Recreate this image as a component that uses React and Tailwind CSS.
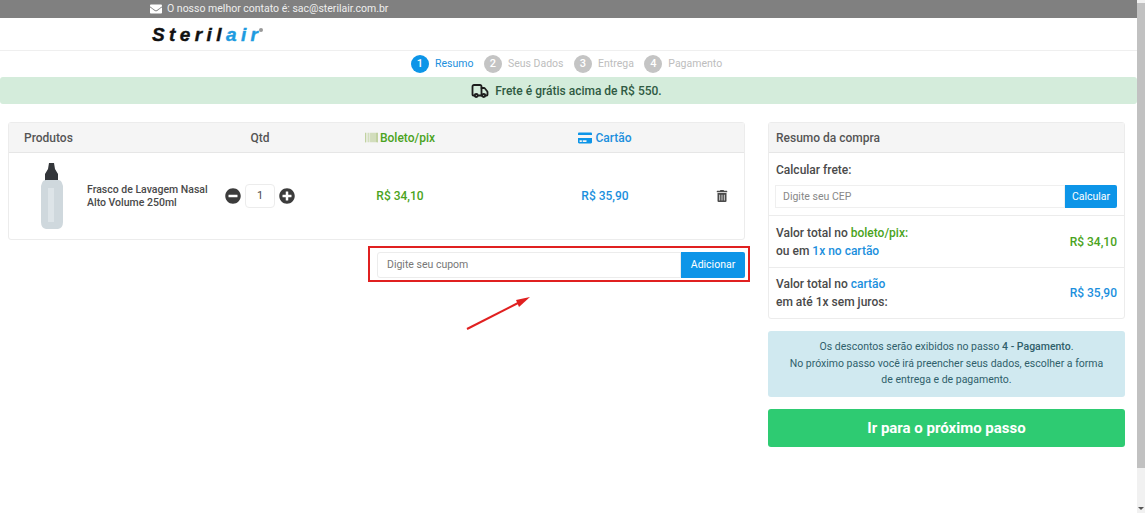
import React from "react";
import { FaEnvelope, FaBarcode, FaCreditCard, FaMinusCircle, FaPlusCircle, FaTrashAlt } from "react-icons/fa";
import { Truck } from "lucide-react";

const Step = ({ n, label, active }) => (
  <div className="flex items-center">
    <span className={`w-[18px] h-[18px] rounded-full flex items-center justify-center text-[11px] font-medium text-white ${active ? "bg-[#0d95e8]" : "bg-[#c4c4c4]"}`}>{n}</span>
    <span className={`ml-[6px] text-[10.5px] ${active ? "text-[#1b8fdd]" : "text-[#bdbdbd]"}`}>{label}</span>
  </div>
);

const Bottle = () => (
  <svg width="24" height="68" viewBox="0 0 24 68" className="shrink-0" aria-hidden="true">
    <path d="M9 1h5l1 6 3 5v7H5v-7l3-5z" fill="#33363a" />
    <path d="M2 21q1-3 4-3h12q3 0 4 3l1 3v36q0 6-5 7H6q-5-1-5-7V24z" fill="#cfd8dd" />
    <path d="M8 26h6v34H8z" fill="#dde4e8" />
  </svg>
);

export default function App() {
  return (
    <div className="flex h-[513px] w-[1145px] overflow-hidden bg-white text-[#4a4a4a] font-['Roboto',sans-serif]">
      <main className="w-[1137px] shrink-0">
        <div className="h-[18px] bg-[#808080] flex items-center pl-[150px] text-[10.5px] text-[#eeeeee]">
          <FaEnvelope className="text-[12px] text-white mr-[5px]" />
          <span>O nosso melhor contato é: sac@sterilair.com.br</span>
        </div>
        <div className="h-[33px] border-b border-[#efefef] pl-[152px] flex items-center">
          <span className="italic font-black text-[19px] tracking-[4.4px] text-[#111] font-['Liberation_Sans',sans-serif] leading-none [-webkit-text-stroke:0.4px_currentColor]">
            Steril<span className="text-[#1d9be0]">air</span>
          </span>
          <span className="w-[4px] h-[4px] rounded-full bg-[#999] self-start mt-[10px] ml-[-3px]" />
        </div>
        <div className="h-[26px] pl-[411px] flex items-center gap-[10.5px]">
          <Step n="1" label="Resumo" active />
          <Step n="2" label="Seus Dados" />
          <Step n="3" label="Entrega" />
          <Step n="4" label="Pagamento" />
        </div>
        <div className="h-[27px] bg-[#d4ecdb] rounded-[3px] flex items-center justify-center pr-[4px] text-[12px] font-medium text-[#2f5a42]">
          <Truck size={18} strokeWidth={2.4} className="text-[#1d1d1d] mr-[6px]" />
          <span>Frete é grátis acima de R$ 550.</span>
        </div>

        <div className="flex pl-[8px] pt-[18px]">
          <section className="w-[737px] shrink-0">
            <div className="border border-[#ececec] rounded-[3px] h-[118px]">
              <div className="h-[30px] bg-[#f5f5f5] border-b border-[#e6e6e6] grid grid-cols-[195px_112px_168px_242px] items-center text-[12px] font-medium text-[#555]">
                <span className="pl-[15px]">Produtos</span>
                <span className="text-center">Qtd</span>
                <span className="flex items-center justify-center text-[#4aa321] text-[12px]">
                  <FaBarcode className="text-[#a9c27a] text-[13px] mr-[2px]" />Boleto/pix
                </span>
                <span className="flex items-center justify-center text-[#1b8fdd] text-[12px]">
                  <FaCreditCard className="text-[#0d95e8] text-[14px] mr-[3px]" />Cartão
                </span>
              </div>
              <div className="h-[86px] grid grid-cols-[195px_112px_168px_242px_1fr] items-center">
                <div className="flex items-center pl-[31px]">
                  <Bottle />
                  <span className="ml-[23px] text-[10.5px] font-medium leading-[13px] text-[#4a4a4a] whitespace-nowrap">Frasco de Lavagem Nasal<br />Alto Volume 250ml</span>
                </div>
                <div className="flex items-center justify-center gap-[4px]">
                  <FaMinusCircle className="text-[16px] text-[#3c3c3c]" />
                  <span className="w-[30px] h-[24px] border border-[#ececec] rounded-[4px] flex items-center justify-center text-[11px]">1</span>
                  <FaPlusCircle className="text-[16px] text-[#3c3c3c]" />
                </div>
                <span className="text-center text-[12px] font-medium text-[#4aa321]">R$ 34,10</span>
                <span className="text-center text-[12px] font-medium text-[#1b8fdd]">R$ 35,90</span>
                <FaTrashAlt className="text-[12px] text-[#4a4a4a] ml-[-10px]" />
              </div>
            </div>
            <div className="ml-[360px] mt-[6px] w-[382px] h-[36px] border-2 border-[#e02020] flex items-center pl-[7px] pr-[3px] pt-[2px]">
              <div className="flex-1 h-[26px] border border-[#ececec] rounded-l-[3px] flex items-center pl-[9px] text-[10.5px] text-[#777]">Digite seu cupom</div>
              <button className="w-[64px] h-[26px] bg-[#0d95e8] rounded-r-[2px] text-white text-[10.5px]">Adicionar</button>
            </div>
            <svg width="70" height="36" viewBox="0 0 70 36" className="ml-[456px] mt-[13px]" aria-hidden="true">
              <path d="M3 34L56 7" stroke="#e02020" strokeWidth="2" fill="none" />
              <path d="M66 2L52 5l3 7z" fill="#e02020" />
            </svg>
          </section>

          <aside className="ml-[23px] w-[357px] shrink-0">
            <div className="border border-[#ececec] rounded-[3px] h-[197px] text-[12px]">
              <div className="h-[30px] bg-[#f5f5f5] border-b border-[#e6e6e6] flex items-center pl-[7px] text-[12px] font-medium text-[#555]">Resumo da compra</div>
              <div className="h-[63px] border-b border-[#ececec] px-[7px]">
                <p className="pt-[10px] leading-[14px] font-medium">Calcular frete:</p>
                <div className="flex mt-[8px] h-[23px] ml-[-1px]">
                  <div className="flex-1 border border-[#efefef] flex items-center pl-[7px] text-[10.5px] text-[#888]">Digite seu CEP</div>
                  <button className="w-[52px] bg-[#0d95e8] rounded-r-[2px] text-white text-[10.5px]">Calcular</button>
                </div>
              </div>
              <div className="h-[52px] border-b border-[#ececec] flex items-center justify-between px-[7px] font-medium leading-[18px]">
                <p>Valor total no <span className="text-[#4aa321]">boleto/pix:</span><br />ou em <span className="text-[#1b8fdd]">1x no cartão</span></p>
                <span className="text-[#4aa321]">R$ 34,10</span>
              </div>
              <div className="h-[50px] flex items-center justify-between px-[7px] font-medium leading-[18px]">
                <p>Valor total no <span className="text-[#1b8fdd]">cartão</span><br />em até 1x sem juros:</p>
                <span className="text-[#1b8fdd]">R$ 35,90</span>
              </div>
            </div>
            <div className="mt-[12px] h-[66px] bg-[#d0e9f0] rounded-[3px] flex items-center justify-center text-center text-[10.5px] leading-[16.5px] text-[#2f5f6b]">
              <p>Os descontos serão exibidos no passo <b className="font-medium">4 - Pagamento</b>.<br />No próximo passo você irá preencher seus dados, escolher a forma<br />de entrega e de pagamento.</p>
            </div>
            <button className="mt-[12px] w-full h-[38px] bg-[#2ecb72] rounded-[3px] text-white text-[15px] font-bold">Ir para o próximo passo</button>
          </aside>
        </div>
      </main>
      <div className="w-[8px] shrink-0 flex flex-col bg-[#f1f1f1] pt-[3px]">
        <div className="h-[465px] bg-[#c1c1c1]" />
        <div className="mt-auto pb-[3px] flex justify-center">
          <span className="w-0 h-0 border-x-[3px] border-x-transparent border-t-[3px] border-t-[#555]" />
        </div>
      </div>
    </div>
  );
}
